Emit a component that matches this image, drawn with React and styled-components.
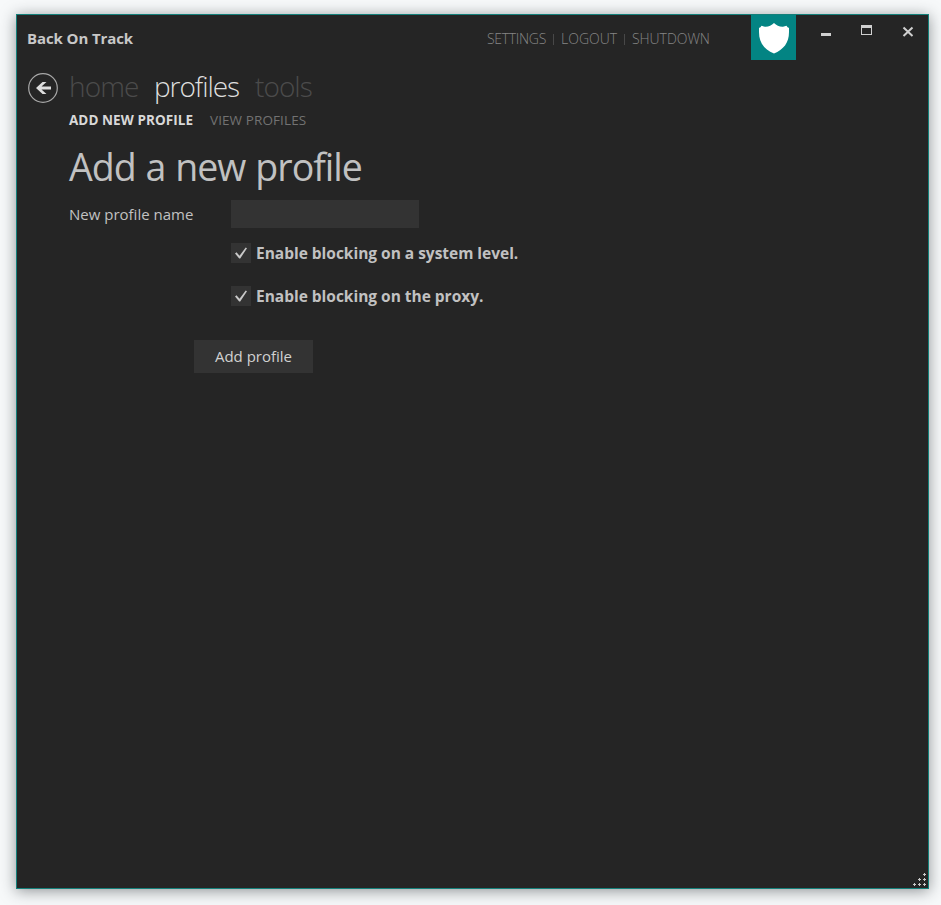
import React from "react";
import styled, { createGlobalStyle } from "styled-components";

const GlobalStyle = createGlobalStyle`
  * { box-sizing: border-box; }
  html, body { margin: 0; padding: 0; }
  body {
    background: #f7f9fa;
    font-family: "Open Sans", "Noto Sans", sans-serif;
    overflow: hidden;
  }
  button { font-family: inherit; border: 0; padding: 0; background: none; display: block; }
`;

const Desktop = styled.div`
  width: 941px;
  height: 905px;
  padding: 14px 12px 16px 16px;
  overflow: hidden;
`;

const AppWindow = styled.main`
  display: flex;
  flex-direction: column;
  height: 875px;
  border: 1px solid #14807a;
  background: #252525;
  box-shadow: 0 2px 14px rgba(40, 45, 50, 0.5);
`;

const TitleBar = styled.header`
  display: flex;
  height: 45px;
  padding-left: 10px;
`;

const AppTitle = styled.div`
  flex: none;
  width: 460px;
  padding-top: 13px;
  line-height: 20px;
  font-size: 15px;
  font-weight: 700;
  letter-spacing: -0.1px;
  color: #c8c8c8;
`;

const SystemLinks = styled.nav`
  flex: none;
  display: flex;
  width: 264px;
  padding-top: 14px;
`;

const SystemLink = styled.button`
  width: ${(p) => p.$width}px;
  height: 20px;
  line-height: 20px;
  font-size: 14px;
  font-weight: 300;
  letter-spacing: ${(p) => p.$tracking}px;
  text-align: left;
  white-space: nowrap;
  color: #858585;
`;

const Divider = styled.span`
  width: 1px;
  height: 11px;
  margin: 5px 7px 0 6px;
  background: #484848;
`;

const Logo = styled.div`
  flex: none;
  width: 45px;
  height: 45px;
  background: #038483;
  svg { display: block; }
`;

const WindowControls = styled.div`
  flex: none;
  display: flex;
  padding: 8px 0 0 17px;
`;

const ControlButton = styled.button`
  width: ${(p) => p.$width}px;
  height: 18px;
  svg { display: block; }
`;

const NavArea = styled.div`
  display: flex;
  height: 72px;
  padding: 12px 0 0 10px;
`;

const BackButton = styled.button`
  width: 42px;
  height: 32px;
  svg { display: block; }
`;

const MainTabs = styled.nav`
  display: flex;
  height: 38px;
`;

const MainTab = styled.button`
  width: ${(p) => p.$width}px;
  height: 28px;
  line-height: 28px;
  font-size: 28px;
  font-weight: 300;
  letter-spacing: ${(p) => p.$tracking}px;
  text-align: left;
  white-space: nowrap;
  color: ${(p) => (p.$active ? "#dedede" : "#4b4b4b")};
`;

const SubTabs = styled.nav`
  display: flex;
  gap: 17px;
`;

const SubTab = styled.button`
  width: ${(p) => p.$width}px;
  height: 20px;
  line-height: 20px;
  font-size: 13.5px;
  font-weight: ${(p) => (p.$active ? 700 : 400)};
  letter-spacing: ${(p) => p.$tracking}px;
  text-align: left;
  white-space: nowrap;
  color: ${(p) => (p.$active ? "#d8d8d8" : "#727272")};
`;

const Content = styled.section`
  flex: 1;
  padding: 8px 0 0 52px;
`;

const Heading = styled.h1`
  margin: 0;
  height: 60px;
  line-height: 53px;
  font-size: 37.5px;
  font-weight: 400;
  letter-spacing: -1px;
  word-spacing: 1.2px;
  color: #c1c1c1;
`;

const ProfileForm = styled.form`
  display: grid;
  grid-template-columns: 162px 1fr;
  grid-template-rows: 28px;
`;

const FieldLabel = styled.label`
  line-height: 28px;
  font-size: 15px;
  color: #c1c1c1;
`;

const NameInput = styled.input`
  width: 188px;
  height: 28px;
  padding: 0 6px;
  border: 0;
  outline: 0;
  background: #333333;
  color: #c1c1c1;
  font: inherit;
`;

const Options = styled.div`
  grid-column: 2;
  display: flex;
  flex-direction: column;
  gap: 23px;
  padding-top: 15px;
`;

const Option = styled.div`
  display: flex;
  gap: 5px;
  height: 20px;
`;

const CheckMark = styled.span`
  width: 20px;
  height: 20px;
  background: #333333;
  svg { display: block; }
`;

const OptionText = styled.span`
  line-height: 20px;
  font-size: 15.5px;
  font-weight: 700;
  letter-spacing: -0.02px;
  color: #c1c1c1;
`;

const AddButton = styled.button`
  grid-column: 1 / -1;
  width: 119px;
  height: 33px;
  margin: 34px 0 0 125px;
  padding-bottom: 2px;
  background: #333333;
  color: #d1d1d1;
  font-size: 15px;
`;

const StatusBar = styled.footer`
  display: flex;
  justify-content: flex-end;
  padding: 0 2px 2px 0;
  svg { display: block; }
`;

const gripDots = [[10, 0], [5, 5], [10, 5], [0, 10], [5, 10], [10, 10]];

function Check() {
  return (
    <CheckMark>
      <svg width="20" height="20">
        <path d="M4 10.5 L5.5 9.2 L8.5 12.8 L14.7 4.5 L16 5.3 L9.2 15.5 H8.2 Z" fill="#c9c9c9" />
      </svg>
    </CheckMark>
  );
}

export default function App() {
  return (
    <Desktop>
      <GlobalStyle />
      <AppWindow>
        <TitleBar>
          <AppTitle>Back On Track</AppTitle>
          <SystemLinks>
            <SystemLink $width={60} $tracking={-0.3}>SETTINGS</SystemLink>
            <Divider />
            <SystemLink $width={57} $tracking={0}>LOGOUT</SystemLink>
            <Divider />
            <SystemLink $width={80} $tracking={-0.05}>SHUTDOWN</SystemLink>
          </SystemLinks>
          <Logo>
            <svg width="45" height="45">
              <path d="M23 8 C20.5 10.5 17.5 12 14 11.8 L10.5 10.8 C9.8 12 9.2 12.6 8 13 V17 C8 28 13.5 34.5 23 38.5 C32.5 34.5 38 28 38 17 V13 C36.8 12.6 36.2 12 35.5 10.8 L32 11.8 C28.5 12 25.5 10.5 23 8 Z" fill="#fff" />
            </svg>
          </Logo>
          <WindowControls>
            <ControlButton $width={41} aria-label="Minimize">
              <svg width="41" height="18"><rect x="8" y="10" width="10" height="3" fill="#d0d0d0" /></svg>
            </ControlButton>
            <ControlButton $width={41} aria-label="Maximize">
              <svg width="41" height="18"><path d="M7 2 H18 V12 H7 Z M8 5 V11 H17 V5 Z" fillRule="evenodd" fill="#d0d0d0" /></svg>
            </ControlButton>
            <ControlButton $width={26} aria-label="Close">
              <svg width="26" height="18"><path d="M8.5 4.5 L17.5 13 M17.5 4.5 L8.5 13" stroke="#d0d0d0" strokeWidth="2" /></svg>
            </ControlButton>
          </WindowControls>
        </TitleBar>
        <NavArea>
          <BackButton aria-label="Back">
            <svg width="32" height="32">
              <circle cx="16" cy="16" r="14.3" fill="none" stroke="#a8a8a8" strokeWidth="1.2" />
              <path d="M9 16 L15.5 10 H19.5 L14.5 14.6 H24 V17.4 H14.5 L19.5 22 H15.5 Z" fill="#dddddd" />
            </svg>
          </BackButton>
          <div>
            <MainTabs>
              <MainTab $width={85} $tracking={-0.9}>home</MainTab>
              <MainTab $width={101} $tracking={-1.05} $active>profiles</MainTab>
              <MainTab $width={70} $tracking={-0.95}>tools</MainTab>
            </MainTabs>
            <SubTabs>
              <SubTab $width={124} $tracking={0.06} $active>ADD NEW PROFILE</SubTab>
              <SubTab $width={98} $tracking={0.1}>VIEW PROFILES</SubTab>
            </SubTabs>
          </div>
        </NavArea>
        <Content>
          <Heading>Add a new profile</Heading>
          <ProfileForm>
            <FieldLabel htmlFor="profile-name">New profile name</FieldLabel>
            <NameInput id="profile-name" />
            <Options>
              <Option><Check /><OptionText>Enable blocking on a system level.</OptionText></Option>
              <Option><Check /><OptionText>Enable blocking on the proxy.</OptionText></Option>
            </Options>
            <AddButton type="button">Add profile</AddButton>
          </ProfileForm>
        </Content>
        <StatusBar>
          <svg width="13" height="13">
            {gripDots.map(([x, y]) => (
              <path key={`${x}-${y}`} d={`M${x + 1} ${y} h1 v1 h1 v1 h-1 v1 h-1 v-1 h-1 v-1 h1 Z`} fill="#c8c8c8" />
            ))}
          </svg>
        </StatusBar>
      </AppWindow>
    </Desktop>
  );
}
